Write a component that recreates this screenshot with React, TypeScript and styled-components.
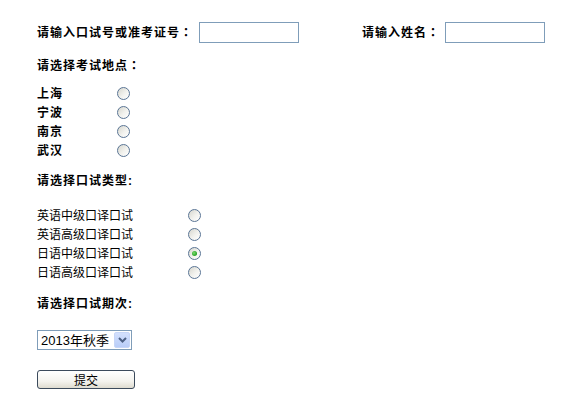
import React, { useState } from 'react';
import styled, { createGlobalStyle } from 'styled-components';

const GlobalStyle = createGlobalStyle`
    body {
        margin: 0;
        background: #fff;
        color: #000;
        font-family: "Liberation Sans", "Noto Sans CJK SC", sans-serif;
        font-size: 12px;
    }
`

const Form = styled.form`
    padding: 22px 0 0 37px;
`

const TopRow = styled.div`
    display: flex;
    align-items: center;
    height: 21px;
`

const FieldLabel = styled.label<{ width: number, offset?: number }>`
    width: ${props => props.width}px;
    margin-left: ${props => props.offset || 0}px;
    font-weight: bold;
    font-size: 12px;
    letter-spacing: 1px;
    line-height: 21px;
    white-space: nowrap;
`

// full-width colon drawn centred in its box
const Colon = styled.span`
    font-family: "Noto Sans CJK TC", sans-serif;
`

const TextInput = styled.input`
    width: 100px;
    height: 21px;
    box-sizing: border-box;
    border: 1px solid #7f9db9;
    padding: 1px 3px;
    font-size: 12px;
    outline: none;
`

const SectionTitle = styled.div<{ top: number }>`
    margin-top: ${props => props.top}px;
    height: 19px;
    line-height: 19px;
    font-weight: bold;
    font-size: 12px;
    letter-spacing: 1px;
`

const OptionList = styled.div<{ top: number }>`
    margin-top: ${props => props.top}px;
    display: flex;
    flex-direction: column;
`

const OptionRow = styled.label`
    display: flex;
    align-items: center;
    height: 19px;
    cursor: pointer;
`

const OptionText = styled.span<{ width: number, bold?: boolean }>`
    width: ${props => props.width}px;
    font-weight: ${props => props.bold ? 'bold' : 'normal'};
    letter-spacing: ${props => props.bold ? '1px' : '0'};
    font-size: 12px;
    line-height: 19px;
`

const Radio = styled.input`
    appearance: none;
    margin: 0 0 3px 0;
    width: 13px;
    height: 13px;
    box-sizing: border-box;
    border-radius: 50%;
    border: 1px solid #5a7595;
    background: linear-gradient(135deg, #d6d6ce 0%, #f2f2ee 55%, #ffffff 100%);
    position: relative;
    cursor: pointer;

    &:checked::after {
        content: '';
        position: absolute;
        left: 3px;
        top: 3px;
        width: 5px;
        height: 5px;
        border-radius: 50%;
        background: radial-gradient(circle at 40% 40%, #7ddc6f 0%, #21a121 70%, #1b8a1b 100%);
    }
`

const SelectBox = styled.div`
    margin-top: 16px;
    display: flex;
    width: 95px;
    height: 20px;
    box-sizing: border-box;
    border: 1px solid #7f9db9;
    background: #fff;
`

const Select = styled.select`
    appearance: none;
    flex: 1;
    min-width: 0;
    border: none;
    outline: none;
    background: transparent;
    padding: 0 0 0 3px;
    font-family: "Liberation Sans", "Noto Sans CJK SC", sans-serif;
    font-size: 13px;
    color: #000;
`

const ArrowBox = styled.div`
    width: 16px;
    margin: 1px;
    display: flex;
    align-items: center;
    justify-content: center;
    border-radius: 2px;
    background: linear-gradient(180deg, #d3e0fd 0%, #b9cdf8 100%);
    border: 1px solid #c7d6f7;
    box-sizing: border-box;
`

const SubmitButton = styled.button`
    margin-top: 20px;
    width: 98px;
    height: 19px;
    padding: 0;
    border: 1px solid #3b4a5c;
    border-radius: 3px;
    background: linear-gradient(180deg, #ffffff 0%, #f4f3ee 60%, #dedbd0 100%);
    font-family: "Noto Sans CJK SC", sans-serif;
    font-size: 12px;
    line-height: 17px;
    color: #000;
    cursor: pointer;
`

const locations = ['上海', '宁波', '南京', '武汉'];
const examTypes = ['英语中级口译口试', '英语高级口译口试', '日语中级口译口试', '日语高级口译口试'];

export default function App() {
    const [location, setLocation] = useState('');
    const [examType, setExamType] = useState('日语中级口译口试');
    const [term, setTerm] = useState('2013年秋季');

    return <>
        <GlobalStyle />
        <Form onSubmit={e => e.preventDefault()}>
            <TopRow>
                <FieldLabel width={162}>请输入口试号或准考证号<Colon>：</Colon></FieldLabel>
                <TextInput type="text" />
                <FieldLabel width={83} offset={63}>请输入姓名<Colon>：</Colon></FieldLabel>
                <TextInput type="text" />
            </TopRow>

            <SectionTitle top={12}>请选择考试地点<Colon>：</Colon></SectionTitle>
            <OptionList top={11}>
                {locations.map(l =>
                    <OptionRow key={l}>
                        <OptionText width={80} bold>{l}</OptionText>
                        <Radio type="radio" name="location" checked={location === l} onChange={() => setLocation(l)} />
                    </OptionRow>
                )}
            </OptionList>

            <SectionTitle top={11}>请选择口试类型:</SectionTitle>
            <OptionList top={16}>
                {examTypes.map(t =>
                    <OptionRow key={t}>
                        <OptionText width={151}>{t}</OptionText>
                        <Radio type="radio" name="examType" checked={examType === t} onChange={() => setExamType(t)} />
                    </OptionRow>
                )}
            </OptionList>

            <SectionTitle top={12}>请选择口试期次:</SectionTitle>
            <SelectBox>
                <Select value={term} onChange={e => setTerm(e.target.value)}>
                    <option>2013年秋季</option>
                    <option>2013年春季</option>
                </Select>
                <ArrowBox>
                    <svg width="9" height="6" viewBox="0 0 9 6">
                        <path d="M1 1 L4.5 4.5 L8 1" fill="none" stroke="#4d6185" strokeWidth="2" />
                    </svg>
                </ArrowBox>
            </SelectBox>

            <SubmitButton type="submit">提交</SubmitButton>
        </Form>
    </>
}
